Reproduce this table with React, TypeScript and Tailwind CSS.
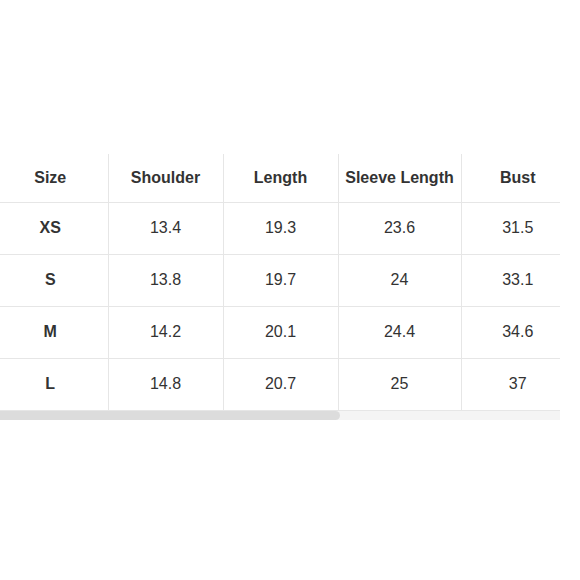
const headers = ['Size', 'Shoulder', 'Length', 'Sleeve Length', 'Bust'];

const rows = [
  ['XS', '13.4', '19.3', '23.6', '31.5'],
  ['S', '13.8', '19.7', '24', '33.1'],
  ['M', '14.2', '20.1', '24.4', '34.6'],
  ['L', '14.8', '20.7', '25', '37'],
];

// table is cut off on both sides, so the first and last columns run past the frame
const widths = ['min-w-[115px]', 'min-w-[115px]', 'min-w-[115px]', 'min-w-[123px]', 'min-w-[113px]'];

export default function App() {
  return (
    <div className="w-[580px] h-[580px] bg-white pt-[154px] text-[#333] font-['Liberation_Sans',Arial,sans-serif]">
      <div className="w-[560px] overflow-hidden">
        <table className="ml-[-7px] border-collapse text-[16px]">
          <thead>
            <tr>
              {headers.map((h, i) => (
                <th
                  key={h}
                  className={`${widths[i]} h-[48px] p-0 text-center font-bold border-b border-[#e6e6e6] ${
                    i > 0 ? 'border-l' : ''
                  }`}
                >
                  {h}
                </th>
              ))}
            </tr>
          </thead>
          <tbody>
            {rows.map((r, ri) => (
              <tr key={ri}>
                {r.map((c, i) => (
                  <td
                    key={i}
                    className={`h-[52px] p-0 text-center border-b border-[#e6e6e6] ${
                      i === 0 ? 'font-bold' : ''
                    } ${i > 0 ? 'border-l' : ''}`}
                  >
                    {c}
                  </td>
                ))}
              </tr>
            ))}
          </tbody>
        </table>
        {/* horizontal scrollbar */}
        <div className="h-[9px] bg-[#f4f4f4]">
          <div className="w-[340px] h-full bg-[#dcdcdc] rounded-r-full" />
        </div>
      </div>
    </div>
  );
}
